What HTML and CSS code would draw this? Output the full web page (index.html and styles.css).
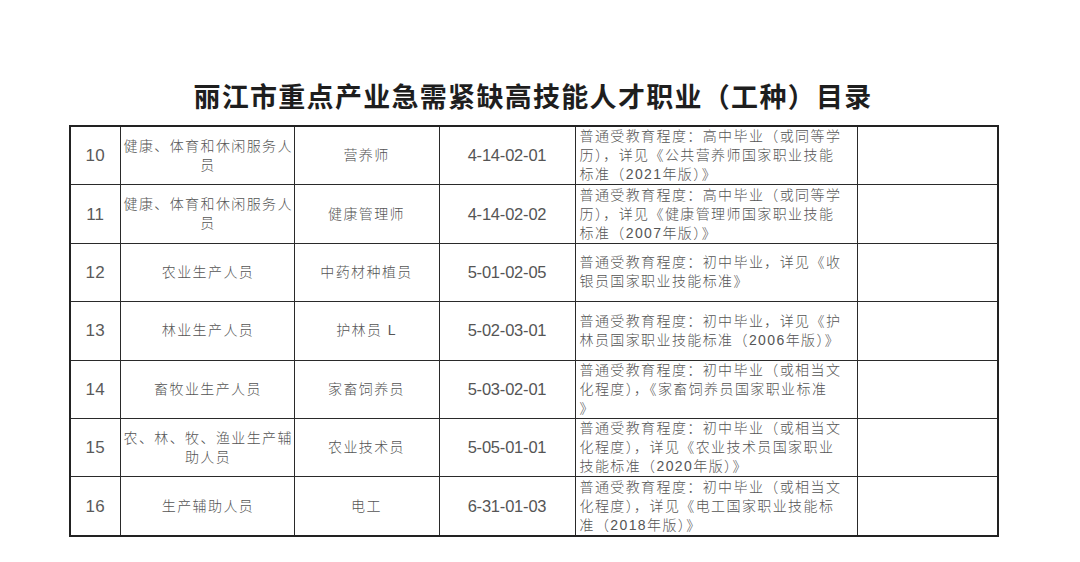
FILE: index.html
```html
<!DOCTYPE html>
<html lang="zh-CN">
<head>
<meta charset="utf-8">
<link rel="stylesheet" href="styles.css">
</head>
<body>
<div class="sheet">
  <h1 class="title">丽江市重点产业急需紧缺高技能人才职业（工种）目录</h1>
  <table class="catalog">
    <colgroup>
      <col class="c-no"><col class="c-cat"><col class="c-job"><col class="c-code"><col class="c-req"><col class="c-note">
    </colgroup>
    <tbody>
      <tr>
        <td class="no">10</td>
        <td class="cat">健康、体育和休闲服务人<br>员</td>
        <td class="job">营养师</td>
        <td class="code">4-14-02-01</td>
        <td class="req">普通受教育程度：高中毕业（或同等学<br>历），详见《公共营养师国家职业技能<br>标准（2021年版）》</td>
        <td class="note"></td>
      </tr>
      <tr>
        <td class="no">11</td>
        <td class="cat">健康、体育和休闲服务人<br>员</td>
        <td class="job">健康管理师</td>
        <td class="code">4-14-02-02</td>
        <td class="req">普通受教育程度：高中毕业（或同等学<br>历），详见《健康管理师国家职业技能<br>标准（2007年版）》</td>
        <td class="note"></td>
      </tr>
      <tr>
        <td class="no">12</td>
        <td class="cat">农业生产人员</td>
        <td class="job">中药材种植员</td>
        <td class="code">5-01-02-05</td>
        <td class="req">普通受教育程度：初中毕业，详见《收<br>银员国家职业技能标准》</td>
        <td class="note"></td>
      </tr>
      <tr>
        <td class="no">13</td>
        <td class="cat">林业生产人员</td>
        <td class="job">护林员 L</td>
        <td class="code">5-02-03-01</td>
        <td class="req">普通受教育程度：初中毕业，详见《护<br>林员国家职业技能标准（2006年版）》</td>
        <td class="note"></td>
      </tr>
      <tr>
        <td class="no">14</td>
        <td class="cat">畜牧业生产人员</td>
        <td class="job">家畜饲养员</td>
        <td class="code">5-03-02-01</td>
        <td class="req">普通受教育程度：初中毕业（或相当文<br>化程度），《家畜饲养员国家职业标准<br>》</td>
        <td class="note"></td>
      </tr>
      <tr>
        <td class="no">15</td>
        <td class="cat">农、林、牧、渔业生产辅<br>助人员</td>
        <td class="job">农业技术员</td>
        <td class="code">5-05-01-01</td>
        <td class="req">普通受教育程度：初中毕业（或相当文<br>化程度），详见《农业技术员国家职业<br>技能标准（2020年版）》</td>
        <td class="note"></td>
      </tr>
      <tr>
        <td class="no">16</td>
        <td class="cat">生产辅助人员</td>
        <td class="job">电工</td>
        <td class="code">6-31-01-03</td>
        <td class="req">普通受教育程度：初中毕业（或相当文<br>化程度），详见《电工国家职业技能标<br>准（2018年版）》</td>
        <td class="note"></td>
      </tr>
    </tbody>
  </table>
</div>
</body>
</html>
```

FILE: styles.css
```css
html, body {
  margin: 0;
  padding: 0;
  background: #ffffff;
}

body {
  width: 1080px;
  height: 562px;
  overflow: hidden;
  font-family: "Liberation Sans", "Noto Sans CJK SC", sans-serif;
}

.sheet {
  width: 928px;
  margin-left: 69px;
  padding-top: 80px;
}

.title {
  margin: 0 0 14px 0;
  height: 31px;
  line-height: 31px;
  text-align: center;
  font-family: "Noto Sans CJK SC", sans-serif;
  font-size: 27px;
  font-weight: 700;
  color: #1e1e1e;
  letter-spacing: 1.3px;
}

.catalog {
  width: 928px;
  border-collapse: collapse;
  table-layout: fixed;
  border: 2px solid #222;
}

.c-no { width: 50px; }
.c-cat { width: 174px; }
.c-job { width: 145px; }
.c-code { width: 136px; }
.c-req { width: 282px; }
.c-note { width: 141px; }

.catalog td {
  border: 1.5px solid #2a2a2a;
  height: 57.4px;
  padding: 0 2px;
  vertical-align: middle;
  text-align: center;
  color: #555;
  font-weight: 300;
  font-size: 14px;
  line-height: 19px;
  letter-spacing: 1.4px;
  white-space: nowrap;
}

.catalog td.no {
  font-size: 17px;
  letter-spacing: 0.3px;
  color: #5a5a5a;
}

.catalog td.code {
  font-size: 16.5px;
  letter-spacing: -0.2px;
  color: #555;
}

.catalog td.cat {
  padding: 0 1px 0 3px;
}

.catalog td.req {
  text-align: left;
  padding: 0 2px 0 4px;
}
```
